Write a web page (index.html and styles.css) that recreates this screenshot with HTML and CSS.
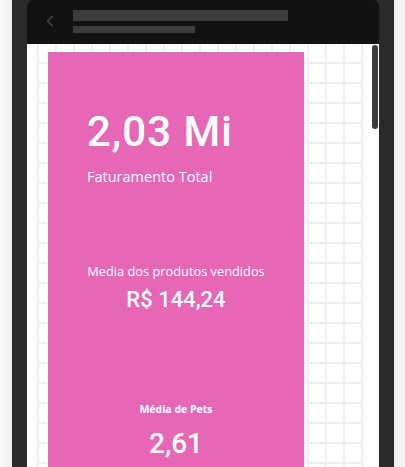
FILE: index.html
```html
<!DOCTYPE html>
<html lang="pt-BR">
<head>
<meta charset="utf-8">
<title>Relatório</title>
<link rel="stylesheet" href="styles.css">
</head>
<body>
<div class="frame">
  <header class="topbar">
    <svg class="back" width="8" height="12" viewBox="0 0 8 12"><path d="M6.5 1 L1.5 6 L6.5 11" fill="none" stroke="#4a4a4a" stroke-width="1.3"/></svg>
    <div class="titles">
      <div class="bar bar-title"></div>
      <div class="bar bar-sub"></div>
    </div>
  </header>
  <main class="canvas">
    <div class="grid">
      <section class="card">
        <div class="value value-big">2,03 Mi</div>
        <div class="label label-big">Faturamento Total</div>
        <div class="label label-mid">Media dos produtos vendidos</div>
        <div class="value value-mid">R$ 144,24</div>
        <div class="label label-small">Média de Pets</div>
        <div class="value value-small">2,61</div>
      </section>
    </div>
    <div class="scrollbar"></div>
  </main>
</div>
</body>
</html>
```
FILE: styles.css
```css
html, body {
  margin: 0;
  padding: 0;
}
body {
  height: 467px;
  overflow: hidden;
  background: linear-gradient(to right, #fbfbfb 0, #efefef 12px, #2a2a2a 12px, #2a2a2a 394px, #efefef 394px, #f8f8f8 100%);
  font-family: "Open Sans", "Noto Sans", sans-serif;
}
.frame {
  margin-left: 12px;
  width: 382px;
  height: 467px;
  box-sizing: border-box;
  padding: 0 15px;
  background: #2a2a2a;
  display: flex;
  flex-direction: column;
}
.topbar {
  height: 44px;
  flex: none;
  background: #121212;
  border-radius: 6px 6px 0 0;
  display: flex;
  align-items: flex-start;
}
.back {
  margin: 15px 0 0 19px;
}
.titles {
  margin: 10px 0 0 19px;
  display: flex;
  flex-direction: column;
  gap: 5px;
}
.bar {
  background: #3c3c3c;
}
.bar-title {
  width: 215px;
  height: 11px;
}
.bar-sub {
  width: 122px;
  height: 7px;
}
.canvas {
  flex: 1;
  background: #ffffff;
  position: relative;
  overflow: hidden;
}
.grid {
  margin-left: 10px;
  width: 326px;
  height: 100%;
  background-image:
    linear-gradient(to right, #f0f0f0 0, #f0f0f0 2px, transparent 2px),
    linear-gradient(to bottom, #f0f0f0 0, #f0f0f0 2px, transparent 2px);
  background-size: 18px 20px, 18px 20px;
  background-position: 0 0, 0 18px;
  overflow: hidden;
}
.card {
  margin: 8px 0 0 11px;
  width: 256px;
  height: 480px;
  background: #e667b6;
  color: #ffffff;
  display: flex;
  flex-direction: column;
}
.value {
  font-family: Roboto, "DejaVu Sans", sans-serif;
  line-height: 1;
  font-weight: 500;
}
.label {
  line-height: 1;
}
.value-big {
  font-size: 42px;
  margin: 59px 0 0 39px;
  letter-spacing: 1px;
}
.label-big {
  font-size: 14.5px;
  margin: 17px 0 0 39px;
}
.label-mid {
  font-size: 12.8px;
  margin-top: 80px;
  text-align: center;
}
.value-mid {
  font-size: 22px;
  margin-top: 12px;
  text-align: center;
}
.label-small {
  font-size: 10.5px;
  font-weight: 700;
  margin-top: 93px;
  text-align: center;
}
.value-small {
  font-size: 28px;
  margin-top: 15px;
  text-align: center;
}
.scrollbar {
  position: absolute;
  top: 1px;
  right: 1px;
  width: 6px;
  height: 84px;
  border-radius: 3px;
  background: #3c3c3c;
}
```
